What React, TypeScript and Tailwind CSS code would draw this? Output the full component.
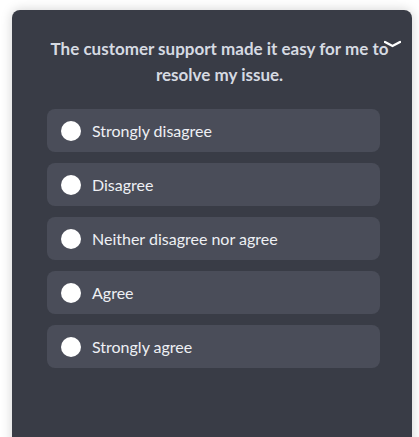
const options = [
    'Strongly disagree',
    'Disagree',
    'Neither disagree nor agree',
    'Agree',
    'Strongly agree',
];

export default function App() {
    return (
        <div className="h-[437px] overflow-hidden bg-white pl-[12px] pt-[10px]" style={{ fontFamily: 'Lato, "Open Sans", sans-serif' }}>
            <div className="relative h-[440px] w-[400px] rounded-t-lg bg-[#393c46] pl-[35px] pr-[32px] pt-[26px] shadow-[0_0_12px_rgba(0,0,0,0.18)]">
                <h2 className="mr-[-12px] text-center text-[17px] font-bold leading-[26px] text-[#d6dae2]">
                    The customer support made it easy for me to resolve my issue.
                </h2>
                <svg className="absolute left-[372px] top-[29px]" width="17" height="10" viewBox="0 0 17 10">
                    <path d="M1 3 L8.5 7 L16 3" stroke="#ffffff" strokeWidth="2.4" fill="none" strokeLinecap="round" />
                </svg>
                <div className="mt-[21px] flex flex-col gap-[11px]">
                    {options.map((label) => (
                        <label key={label} className="flex h-[43px] cursor-pointer items-center rounded-lg bg-[#4a4d59] pl-[14px]">
                            <span className="h-[20px] w-[20px] rounded-full bg-white" />
                            <span className="ml-[11px] text-[16px] text-[#eef0f4]">{label}</span>
                        </label>
                    ))}
                </div>
            </div>
        </div>
    );
}
